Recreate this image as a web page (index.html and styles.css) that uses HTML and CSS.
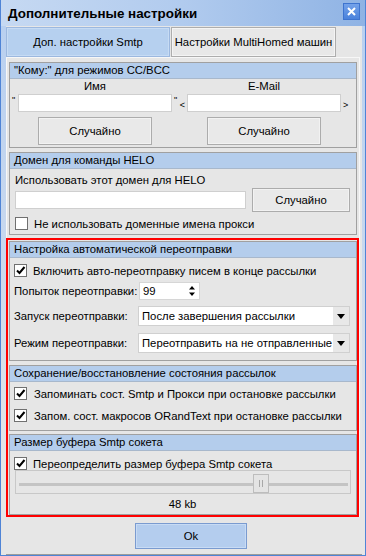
FILE: index.html
```html
<!DOCTYPE html>
<html>
  <head>
    <meta charset="utf-8">
    <title>Дополнительные настройки</title>
    <link rel="stylesheet" href="styles.css">
  </head>
  <body>
    <div class="window">
      <div class="titlebar">
        <span class="title">Дополнительные настройки</span>
        <button class="close">
          <svg width="9" height="9" viewBox="0 0 9 9"><path d="M1 1L8 8M8 1L1 8" stroke="#fff" stroke-width="2"/></svg>
        </button>
      </div>

      <div class="client">
        <div class="tabs">
          <button class="tab active">Доп. настройки Smtp</button>
          <button class="tab">Настройки MultiHomed машин</button>
        </div>

        <div class="page">
          <div class="group recipients">
            <div class="group-head">"Кому:" для режимов CC/BCC</div>
            <div class="recipient-grid">
              <span></span><span class="col-label">Имя</span><span></span><span class="col-label">E-Mail</span><span></span>
              <span class="mark">"</span><input type="text" class="field"><span class="mark">" <b>&lt;</b></span><input type="text" class="field"><span class="mark"><b>&gt;</b></span>
              <span></span><button class="btn random">Случайно</button><span></span><button class="btn random">Случайно</button><span></span>
            </div>
          </div>

          <div class="group helo">
            <div class="group-head">Домен для команды HELO</div>
            <div class="helo-body">
              <div class="line">Использовать этот домен для HELO</div>
              <div class="helo-row">
                <input type="text" class="field helo-field">
                <button class="btn helo-btn">Случайно</button>
              </div>
              <label class="check"><span class="box"></span>Не использовать доменные имена прокси</label>
            </div>
          </div>

          <div class="marked">
            <div class="group resend">
              <div class="group-head">Настройка автоматической переотправки</div>
              <div class="resend-body">
                <label class="check"><span class="box on"><svg width="11" height="11" viewBox="0 0 11 11"><path d="M2 5.5L4.5 8L9.5 2" fill="none" stroke="#000" stroke-width="2"/></svg></span>Включить авто-переотправку писем в конце рассылки</label>
                <div class="form-row tries">
                  <span class="form-label">Попыток переотправки:</span>
                  <div class="spin">
                    <span>99</span>
                    <svg width="8" height="12" viewBox="0 0 8 12"><path d="M4 1L7 4.5H1Z M1 7.5H7L4 11Z" fill="#000"/></svg>
                  </div>
                </div>
                <div class="form-row">
                  <span class="form-label">Запуск переотправки:</span>
                  <div class="select">
                    <span class="select-text">После завершения рассылки</span>
                    <span class="select-arrow"><svg width="8" height="5" viewBox="0 0 8 5"><path d="M0 0H8L4 5Z" fill="#000"/></svg></span>
                  </div>
                </div>
                <div class="form-row">
                  <span class="form-label">Режим переотправки:</span>
                  <div class="select">
                    <span class="select-text">Переотправить на не отправленные</span>
                    <span class="select-arrow"><svg width="8" height="5" viewBox="0 0 8 5"><path d="M0 0H8L4 5Z" fill="#000"/></svg></span>
                  </div>
                </div>
              </div>
            </div>

            <div class="group state">
              <div class="group-head">Сохранение/восстановление состояния рассылок</div>
              <div class="state-body">
                <label class="check"><span class="box on"><svg width="11" height="11" viewBox="0 0 11 11"><path d="M2 5.5L4.5 8L9.5 2" fill="none" stroke="#000" stroke-width="2"/></svg></span>Запоминать сост. Smtp и Прокси при остановке рассылки</label>
                <label class="check"><span class="box on"><svg width="11" height="11" viewBox="0 0 11 11"><path d="M2 5.5L4.5 8L9.5 2" fill="none" stroke="#000" stroke-width="2"/></svg></span>Запом. сост. макросов ORandText при остановке рассылки</label>
              </div>
            </div>

            <div class="group buffer">
              <div class="group-head">Размер буфера Smtp сокета</div>
              <div class="buffer-body">
                <label class="check"><span class="box on"><svg width="11" height="11" viewBox="0 0 11 11"><path d="M2 5.5L4.5 8L9.5 2" fill="none" stroke="#000" stroke-width="2"/></svg></span>Переопределить размер буфера Smtp сокета</label>
                <div class="slider">
                  <div class="track"></div>
                  <div class="thumb"><i></i><i></i></div>
                </div>
                <div class="value">48 kb</div>
              </div>
            </div>
          </div>
        </div>

        <div class="footer">
          <button class="ok">Ok</button>
        </div>
      </div>
    </div>
  </body>
</html>
```

FILE: styles.css
```css
*,
*:after,
*:before {
  box-sizing: border-box;
  margin: 0;
  padding: 0;
}

html,
body {
  width: 366px;
  height: 556px;
  overflow: hidden;
}

body {
  font-family: "Liberation Sans", Arial, sans-serif;
  font-size: 11.3px;
  line-height: 14px;
  color: #000;
  background: #e6e6e6;
}

button,
input {
  font: inherit;
  color: inherit;
}

.window {
  width: 366px;
  height: 556px;
  display: flex;
  flex-direction: column;
  border: 1px solid #4f84d6;
  border-top: 0;
  background: linear-gradient(to bottom, #b7cff0 0%, #c8d8ee 45%, #e6e6e6 85%);
}

/* title bar */

.titlebar {
  height: 26px;
  flex: none;
  display: flex;
  align-items: center;
  justify-content: space-between;
  padding: 0 5px 0 7px;
  background: linear-gradient(to right, #c6d9f2 0%, #b1cbee 50%, #8fb3e4 100%);
}

.title {
  font-size: 13.4px;
  font-weight: bold;
  margin-top: 1px;
}

.close {
  width: 17px;
  height: 17px;
  margin-top: -4px;
  display: flex;
  align-items: center;
  justify-content: center;
  border: 1px solid #3e74cf;
  background: linear-gradient(to bottom, #74a2e9, #4a82dc);
}

/* client area */

.client {
  flex: 1;
  margin: 0 3px 0 5px;
  background: #e6e6e6;
  border-bottom: 1px solid #9c9c9c;
  display: flex;
  flex-direction: column;
}

.tabs {
  display: flex;
  gap: 1px;
  margin-top: 1px;
}

.tab {
  height: 30px;
  width: 164px;
  white-space: nowrap;
  border: 1px solid #adadad;
  box-shadow: inset 0 0 0 1px #f4f4f4;
  background: #e8e8e8;
}

.tab + .tab {
  width: 165px;
}

.tab.active {
  background: #b6d0ef;
  border-color: #9cb8df;
  box-shadow: inset 0 0 0 1px #c6dbf4;
}

.page {
  width: 354px;
  border: 1px solid #f7f7f7;
  border-bottom: 0;
  padding: 4px 0 0 1px;
}

/* group boxes */

.group {
  width: 348px;
  margin-left: 1px;
  border: 1px solid #a0a0a0;
}

.group-head {
  height: 16px;
  padding-left: 4px;
  line-height: 15px;
  white-space: nowrap;
  background: #b4cdec;
  border-bottom: 1px solid #a8b8cc;
}

.helo {
  margin-top: 4px;
}

.marked {
  width: 353px;
  margin: 3px 0 0 -2px;
  padding: 1px 0 0 1px;
  border: 2px solid #ff0000;
}

.marked .group {
  margin-left: 0;
}

.state {
  margin-top: 4px;
}

.buffer {
  margin-top: 3px;
}

/* controls */

.field {
  height: 18px;
  border: 1px solid #cfcfcf;
  background: #fff;
  outline: 0;
}

.btn {
  border: 1px solid #acacac;
  box-shadow: inset 0 0 0 1px #f2f2f2;
  background: #e9e9e9;
}

.check {
  display: flex;
  align-items: center;
  height: 13px;
  gap: 6px;
  white-space: nowrap;
}

.box {
  width: 13px;
  height: 13px;
  flex: none;
  border: 1px solid #707070;
  background: #fff;
  display: flex;
  align-items: center;
  justify-content: center;
}

/* recipients */

.recipient-grid {
  display: grid;
  grid-template-columns: 8px 154px 15px 154px 1fr;
  grid-template-rows: 14px 19px 33px;
  padding-bottom: 2px;
}

.col-label {
  text-align: center;
}

.mark {
  padding-left: 2px;
  font-size: 9px;
  line-height: 10px;
  margin-top: 2px;
  white-space: nowrap;
}

.mark b {
  font-weight: normal;
  display: inline-block;
  vertical-align: top;
  margin-top: 5px;
}

.recipient-grid .field {
  width: 154px;
  margin-top: 1px;
}

.recipient-grid .random {
  width: 114px;
  height: 28px;
  justify-self: center;
  margin-top: 5px;
}

/* helo */

.helo-body {
  padding: 4px 6px 4px 5px;
}

.helo-row {
  display: flex;
  align-items: center;
  gap: 6px;
  margin-top: 1px;
}

.helo-field {
  width: 231px;
}

.helo-btn {
  width: 98px;
  height: 24px;
}

.helo .check {
  margin-top: 5px;
}

/* resend */

.resend-body {
  padding: 6px 6px 7px 4px;
}

.form-row {
  display: flex;
  align-items: center;
  height: 20px;
  margin-top: 6px;
}

.form-row.tries {
  height: 18px;
  margin-top: 5px;
}

.form-row + .form-row + .form-row {
  margin-top: 7px;
}

.form-label {
  width: 124px;
  flex: none;
  white-space: nowrap;
}

.spin {
  width: 61px;
  height: 18px;
  margin-left: 1px;
  display: flex;
  align-items: center;
  justify-content: space-between;
  padding: 0 3px 0 3px;
  background: #fff;
  border: 1px solid #d6d6d6;
}

.select {
  width: 212px;
  height: 20px;
  display: flex;
  align-items: center;
  background: #fff;
  border: 1px solid #d0d0d0;
  overflow: hidden;
}

.select-text {
  flex: 1;
  padding-left: 3px;
  white-space: nowrap;
  overflow: hidden;
}

.select-arrow {
  width: 16px;
  height: 18px;
  flex: none;
  display: flex;
  align-items: center;
  justify-content: center;
  background: #e8e8e8;
}

/* state */

.state-body {
  padding: 5px 6px 8px 4px;
}

.state .check + .check {
  margin-top: 9px;
}

.state .check {
  gap: 7px;
}

/* buffer */

.buffer-body {
  padding: 6px 5px 3px 4px;
}

.slider {
  position: relative;
  width: 336px;
  height: 24px;
  margin-left: 1px;
  border: 1px solid #c8c8c8;
}

.track {
  margin: 12px 2px 0 3px;
  height: 3px;
  background: #c4c4c4;
}

.thumb {
  position: absolute;
  left: 237px;
  top: 3px;
  width: 16px;
  height: 19px;
  border: 1px solid #bdbdbd;
  background: #e4e4e4;
  display: flex;
  justify-content: center;
  align-items: center;
  gap: 2px;
}

.thumb i {
  width: 1px;
  height: 7px;
  background: #a8a8a8;
}

.value {
  text-align: center;
  margin-top: 3px;
}

/* footer */

.footer {
  display: flex;
  justify-content: center;
  padding: 6px 0 0 14px;
}

.ok {
  width: 112px;
  height: 26px;
  border: 1px solid #7a9bd0;
  box-shadow: inset 0 0 0 1px #c8dbf4;
  background: #b4cdee;
}
```
